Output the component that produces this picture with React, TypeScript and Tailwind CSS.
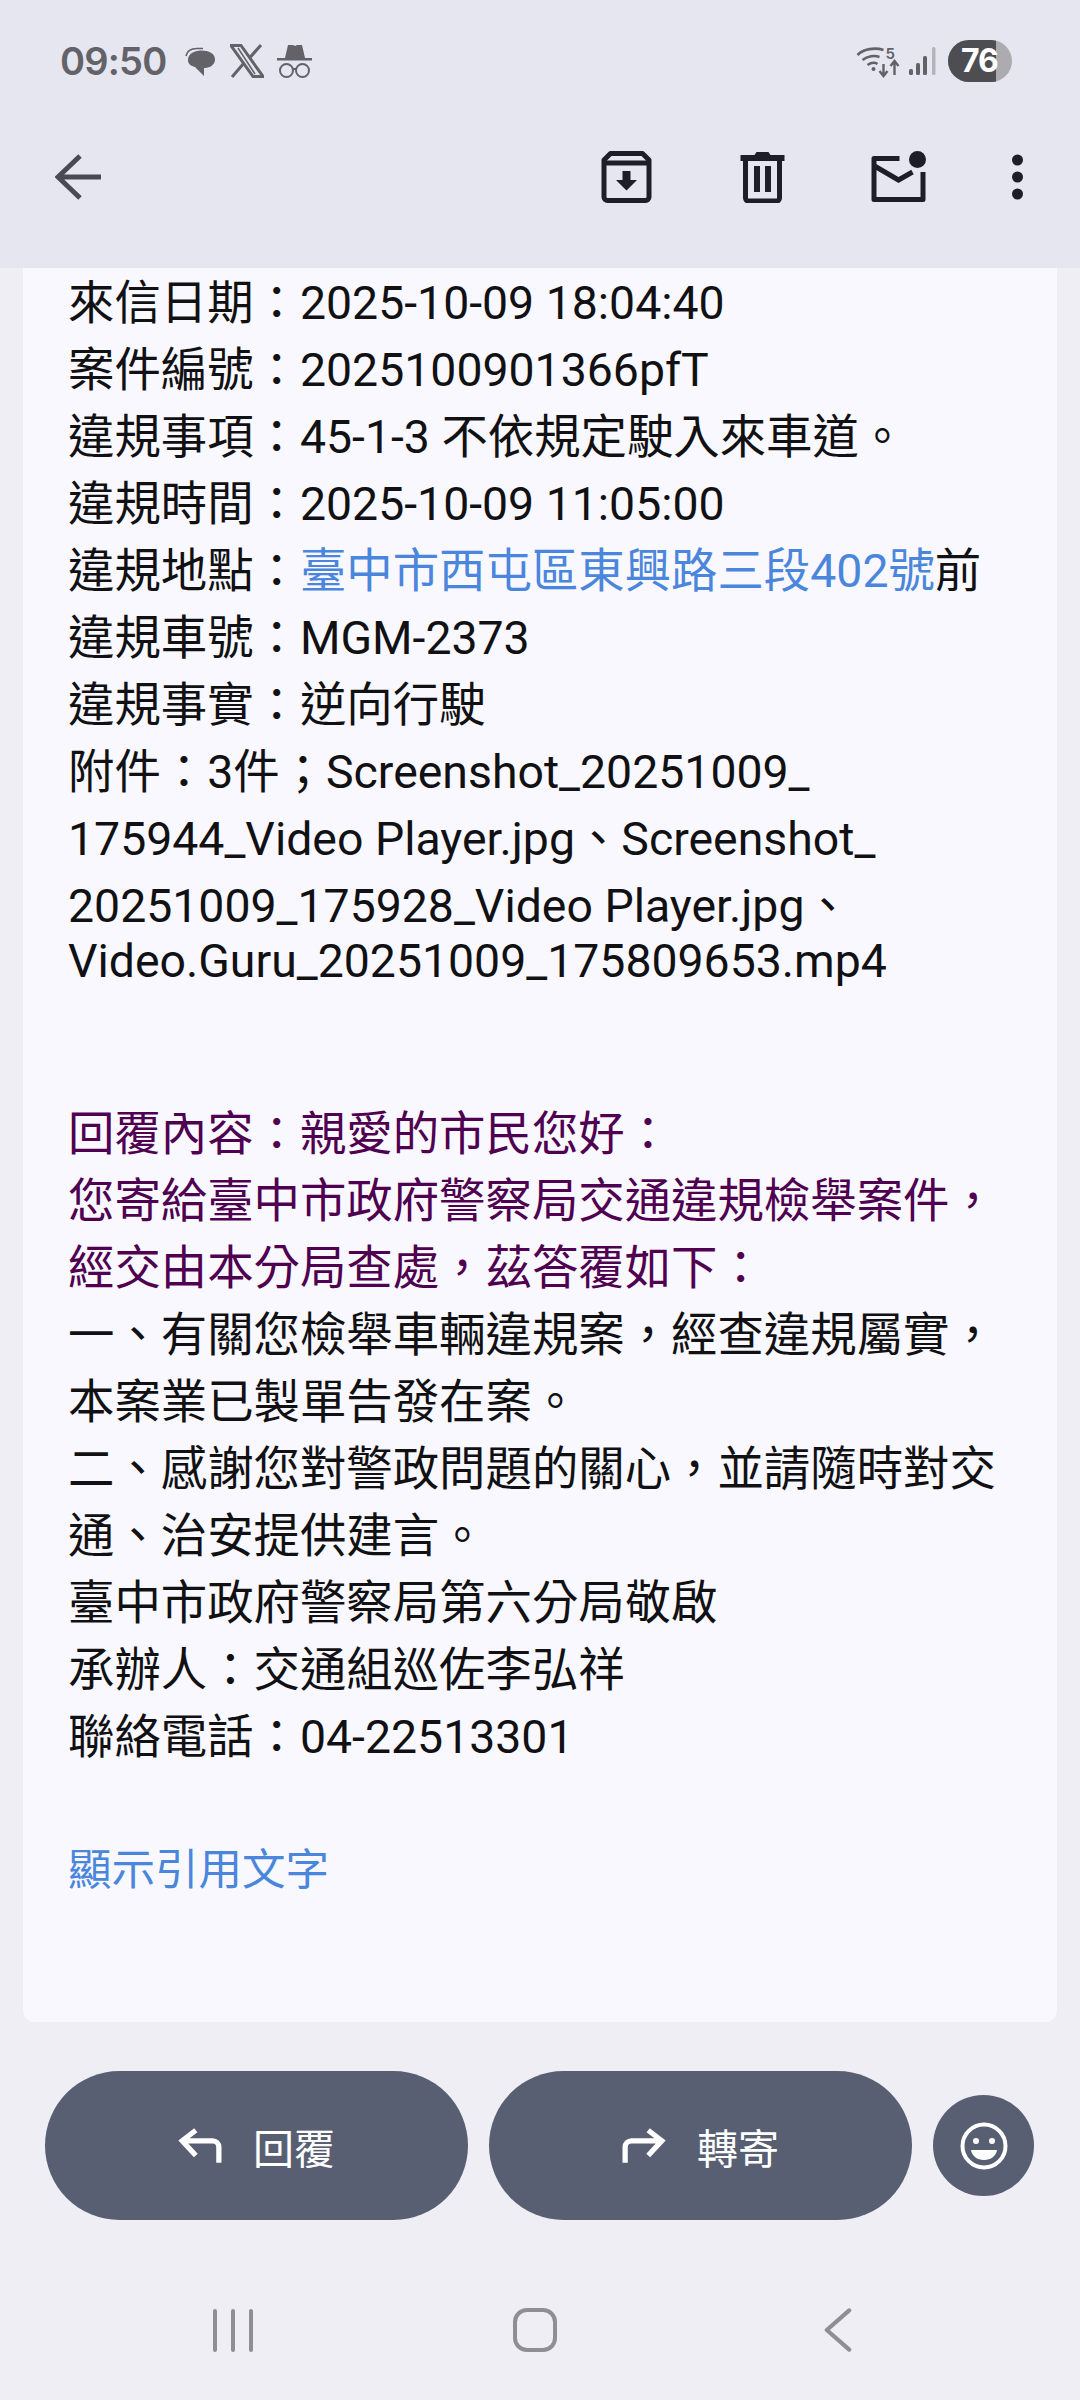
import React from "react";

const Line = ({ children, className = "" }: { children: React.ReactNode; className?: string }) => (
  <div className={`h-[67px] leading-[67px] whitespace-nowrap ${className}`}>{children}</div>
);

function StatusLeft() {
  return (
    <div className="flex items-center">
      <span className="text-[38px] leading-[44px] font-semibold text-[#626268] font-['Inter',sans-serif] tracking-[-0.8px]">09:50</span>
      <svg className="ml-[19px]" width="32" height="32" viewBox="0 0 32 32">
        <path d="M1 11C2 6 6 3.500 12 3.500h6" fill="none" stroke="#626268" strokeWidth="1.600" />
        <path d="M3 15C3 9 9 5.500 16 5.500c8 0 14 3 14 9 0 6-6 8.500-11 8.500v8l-9-9c-4-1-7-3-7-7z" fill="#626268" />
      </svg>
      <svg className="ml-[13px]" width="34" height="34" viewBox="0 0 34 34">
        <path d="M1 1.500h10l22 31H23z" fill="none" stroke="#626268" strokeWidth="3" />
        <path d="M31 1 19 14.500M14 19 2 33" stroke="#626268" strokeWidth="3" />
        <path d="M8 4l17 26" stroke="#626268" strokeWidth="1.500" />
      </svg>
      <svg className="ml-[13px]" width="35" height="36" viewBox="0 0 35 36">
        <path d="M8 15 11 2h5l2 1 2-1h5l3 13z" fill="#626268" />
        <rect x="0" y="15" width="35" height="2.500" fill="#626268" />
        <circle cx="9.500" cy="27.500" r="6.500" fill="none" stroke="#626268" strokeWidth="2" />
        <circle cx="25.500" cy="27.500" r="6.500" fill="none" stroke="#626268" strokeWidth="2" />
        <path d="M16 26h3" stroke="#626268" strokeWidth="2" />
      </svg>
    </div>
  );
}

function StatusRight() {
  return (
    <div className="flex items-center">
      <svg width="45" height="34" viewBox="0 0 44 34">
        <path d="M1 11C7 5 18 3 27 6M6 16c5-4 12-5 17-3M11 21c3-2 7-3 10-1" fill="none" stroke="#626268" strokeWidth="2.600" />
        <circle cx="17" cy="25" r="2" fill="#626268" />
        <text x="29" y="15" fontSize="15" fontWeight="600" fill="#626268" fontFamily="Inter, sans-serif">5</text>
        <path d="M27 20v11m-4-4 4 5 4-5" fill="none" stroke="#626268" strokeWidth="2.400" />
        <path d="M38 31V18m-4 4 4-5 4 5" fill="none" stroke="#626268" strokeWidth="2.400" />
      </svg>
      <svg className="ml-[8px]" width="28" height="30" viewBox="0 0 28 30">
        <rect x="0" y="23" width="4" height="6" rx="1.500" fill="#626268" />
        <rect x="7" y="17" width="4" height="12" rx="1.500" fill="#626268" />
        <rect x="14" y="10" width="4" height="19" rx="1.500" fill="#626268" />
        <rect x="23" y="1" width="3.500" height="28" rx="1.500" fill="#b4b4ba" />
      </svg>
      <div className="relative ml-[11px] w-[64px] h-[42px] rounded-full overflow-hidden bg-[#ababb0] flex">
        <div className="w-[48px] h-full bg-[#4d4d52]" />
        <span className="absolute left-[13px] top-0 text-[32px] leading-[42px] font-bold text-white font-['Inter',sans-serif] tracking-[-1px]">76</span>
      </div>
    </div>
  );
}

function Toolbar() {
  const c = "#1e1e2a";
  return (
    <div className="flex items-center mt-[62px] pl-[55px] pr-[57px] h-[62px]">
      <svg width="46" height="46" viewBox="0 0 46 46">
        <path d="M46 23H4M25 2 3 23l22 21" fill="none" stroke="#4a4a56" strokeWidth="5" />
      </svg>
      <svg className="ml-auto" width="51" height="52" viewBox="0 0 50 52">
        <path d="M9 2.500h32L47.500 9v37a3.500 3.500 0 0 1-3.500 3.500H6A3.500 3.500 0 0 1 2.500 46V9z" fill="none" stroke={c} strokeWidth="5" strokeLinejoin="round" />
        <path d="M2.500 12h45" stroke={c} strokeWidth="5" />
        <path d="M21 20h8v9h6.500L25 39.500 14.500 29H21z" fill={c} />
      </svg>
      <svg className="ml-[88px]" width="45" height="52" viewBox="0 0 44 52">
        <path d="M0 4h14l2-3h12l2 3h14v6H0z" fill={c} />
        <path d="M5 8v39a3 3 0 0 0 3 3h28a3 3 0 0 0 3-3V8" fill="none" stroke={c} strokeWidth="5" />
        <rect x="13.500" y="15" width="6" height="26" fill={c} />
        <rect x="24.500" y="15" width="6" height="26" fill={c} />
      </svg>
      <svg className="ml-[85px]" width="57" height="52" viewBox="0 0 56 52">
        <path d="M29 7.500H3.500v41h49V21" fill="none" stroke={c} strokeWidth="5" strokeLinejoin="round" />
        <path d="M4 15l24 14 14-8" fill="none" stroke={c} strokeWidth="5" />
        <circle cx="47" cy="8.500" r="8.500" fill={c} />
      </svg>
      <svg className="ml-[85px]" width="11" height="46" viewBox="0 0 11 46">
        <circle cx="5.500" cy="6" r="5.500" fill={c} />
        <circle cx="5.500" cy="23" r="5.500" fill={c} />
        <circle cx="5.500" cy="40" r="5.500" fill={c} />
      </svg>
    </div>
  );
}

function Message() {
  return (
    <div className="ml-[23px] mr-[23px] h-[1754px] rounded-b-[12px] bg-[#f8f8fe] pl-[45px] pt-[2px] text-[46.4px] text-[#111114] font-['Roboto','Noto_Sans_CJK_TC',sans-serif]">
      <Line>來信日期：2025-10-09 18:04:40</Line>
      <Line>案件編號：2025100901366pfT</Line>
      <Line>違規事項：45-1-3 不依規定駛入來車道。</Line>
      <Line>違規時間：2025-10-09 11:05:00</Line>
      <Line>
        違規地點：<span className="text-[#4a86dc]">臺中市西屯區東興路三段402號</span>前
      </Line>
      <Line>違規車號：MGM-2373</Line>
      <Line>違規事實：逆向行駛</Line>
      <Line>附件：3件；Screenshot_20251009_</Line>
      <Line>175944_Video Player.jpg、Screenshot_</Line>
      <Line>20251009_175928_Video Player.jpg、</Line>
      <div className="h-[43px] leading-[43px] whitespace-nowrap">Video.Guru_20251009_175809653.mp4</div>
      <div className="mt-[118px] text-[#500050]">
        <Line>回覆內容：親愛的市民您好：</Line>
        <Line>您寄給臺中市政府警察局交通違規檢舉案件，</Line>
        <Line>經交由本分局查處，茲答覆如下：</Line>
      </div>
      <Line>一、有關您檢舉車輛違規案，經查違規屬實，</Line>
      <Line>本案業已製單告發在案。</Line>
      <Line>二、感謝您對警政問題的關心，並請隨時對交</Line>
      <Line>通、治安提供建言。</Line>
      <Line>臺中市政府警察局第六分局敬啟</Line>
      <Line>承辦人：交通組巡佐李弘祥</Line>
      <Line>聯絡電話：04-22513301</Line>
      <Line className="mt-[66px] text-[43.5px] text-[#4a86dc]">顯示引用文字</Line>
    </div>
  );
}

function ActionButton({ label, flip }: { label: string; flip?: boolean }) {
  return (
    <div className="w-[423px] h-[149px] rounded-full bg-[#585f73] flex items-center justify-center text-white text-[41px] font-['Noto_Sans_CJK_TC',sans-serif]">
      <svg width="44" height="36" viewBox="0 0 42 34" className={flip ? "-scale-x-100" : ""}>
        <path d="M39 33V18a6 6 0 0 0-6-6H4M17 2 4 12l13 14" fill="none" stroke="#fff" strokeWidth="5" />
      </svg>
      <span className="ml-[31px] leading-[44px]">{label}</span>
    </div>
  );
}

function Actions() {
  return (
    <div className="flex items-center mt-[49px] pl-[45px] gap-[21px]">
      <ActionButton label="回覆" />
      <ActionButton label="轉寄" flip />
      <div className="w-[101px] h-[101px] rounded-full bg-[#585f73] flex items-center justify-center">
        <svg width="48" height="48" viewBox="0 0 48 48">
          <circle cx="24" cy="24" r="21.500" fill="none" stroke="#fff" strokeWidth="4" />
          <circle cx="16" cy="19" r="3" fill="#fff" />
          <circle cx="32" cy="19" r="3" fill="#fff" />
          <path d="M11 28h26c-1 6-6 10-13 10s-12-4-13-10z" fill="#fff" />
        </svg>
      </div>
    </div>
  );
}

function NavBar() {
  return (
    <div className="flex items-center mt-[87px] h-[46px]">
      <div className="ml-[213px] flex gap-[14px]">
        <div className="w-[4px] h-[43px] rounded-full bg-[#8e8e94]" />
        <div className="w-[4px] h-[43px] rounded-full bg-[#8e8e94]" />
        <div className="w-[4px] h-[43px] rounded-full bg-[#8e8e94]" />
      </div>
      <div className="ml-[260px] w-[44px] h-[44px] border-[4px] border-[#8e8e94] rounded-[14px]" />
      <svg className="ml-[267px]" width="28" height="46" viewBox="0 0 30 46">
        <path d="M27 2 3 23l24 21" fill="none" stroke="#8e8e94" strokeWidth="4.500" strokeLinecap="round" strokeLinejoin="round" />
      </svg>
    </div>
  );
}

export default function App() {
  return (
    <div className="w-[1080px] h-[2400px] overflow-hidden bg-[#eeeef4]">
      <div className="h-[268px] bg-[#e6e6f0] pt-[38px]">
        <div className="flex items-center justify-between pl-[60px] pr-[68px] h-[46px]">
          <StatusLeft />
          <StatusRight />
        </div>
        <Toolbar />
      </div>
      <Message />
      <Actions />
      <NavBar />
    </div>
  );
}
